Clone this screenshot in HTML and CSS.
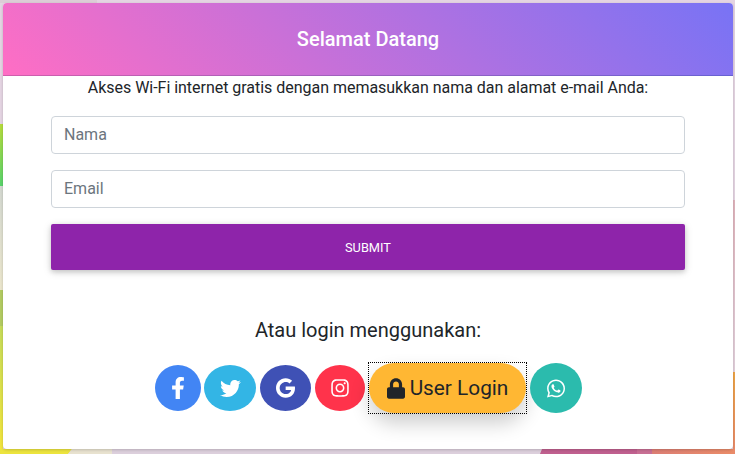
FILE: index.html
```html
<!DOCTYPE html>
<html lang="id">
<head>
<meta charset="utf-8">
<title>Selamat Datang</title>
<link rel="stylesheet" href="styles.css">
</head>
<body>
<svg class="backdrop" width="735" height="454" viewBox="0 0 735 454" aria-hidden="true">
  <defs>
    <linearGradient id="lime" x1="0" y1="0" x2="0" y2="1"><stop offset="0" stop-color="#b6dc3c"/><stop offset="1" stop-color="#58d36c"/></linearGradient>
    <linearGradient id="beige" x1="0" y1="0" x2="0" y2="1"><stop offset="0" stop-color="#d3d8d0"/><stop offset="1" stop-color="#ebe6cc"/></linearGradient>
    <linearGradient id="yellow" x1="0" y1="0" x2="0" y2="1"><stop offset="0" stop-color="#c6dc5a"/><stop offset="1" stop-color="#f4e53c"/></linearGradient>
    <linearGradient id="orange" x1="0" y1="0" x2="0" y2="1"><stop offset="0" stop-color="#eda445"/><stop offset="1" stop-color="#e98a6c"/></linearGradient>
    <linearGradient id="pink" x1="0" y1="0" x2="0" y2="1"><stop offset="0" stop-color="#e0b4bc"/><stop offset="1" stop-color="#e2d0dc"/></linearGradient>
    <linearGradient id="coral" x1="0" y1="0" x2="1" y2="0"><stop offset="0" stop-color="#dc7e74"/><stop offset="1" stop-color="#ea8c68"/></linearGradient>
  </defs>
  <rect width="735" height="454" fill="#e4d4e2"/>
  <rect x="0" y="0" width="97" height="3" fill="#dccdd6"/>
  <rect x="0" y="124" width="3" height="62" fill="url(#lime)"/>
  <rect x="0" y="186" width="3" height="104" fill="url(#beige)"/>
  <rect x="0" y="325" width="3" height="129" fill="url(#yellow)"/>
  <rect x="0" y="290" width="3" height="36" fill="#b3cb62"/>
  <polygon points="0,449 72,449 68,454 0,454" fill="#ece43e"/>
  <polygon points="72,449 116,449 112,454 68,454" fill="#e8e2cf"/>
  <rect x="112" y="449" width="430" height="5" fill="#dccfdc"/>
  <polygon points="542,449 637,449 637,454 540,454" fill="#c0608f"/>
  <rect x="637" y="449" width="15" height="5" fill="#c86f94"/>
  <rect x="652" y="449" width="83" height="5" fill="url(#coral)"/>
  <rect x="733" y="200" width="2" height="172" fill="url(#pink)"/>
  <rect x="733" y="372" width="2" height="82" fill="url(#orange)"/>
</svg>

<main class="card">
  <header class="card-head">Selamat Datang</header>
  <p class="intro">Akses Wi-Fi internet gratis dengan memasukkan nama dan alamat e-mail Anda:</p>
  <form class="form">
    <input class="field" type="text" placeholder="Nama">
    <input class="field" type="text" placeholder="Email">
    <button class="submit" type="button">SUBMIT</button>
  </form>
  <p class="alt">Atau login menggunakan:</p>
  <div class="socials">
    <a class="social fb"><svg class="ico-f" viewBox="0 0 320 512"><path d="M279.14 288l14.22-92.66h-88.91v-60.13c0-25.35 12.42-50.06 52.24-50.06h40.42V6.26S260.43 0 225.36 0c-73.22 0-121.08 44.38-121.08 124.72v70.62H22.89V288h81.39v224h100.17V288z"/></svg></a>
    <a class="social tw"><svg class="ico-t" viewBox="0 0 512 512"><path d="M459.37 151.716c.325 4.548.325 9.097.325 13.645 0 138.72-105.583 298.558-298.558 298.558-59.452 0-114.68-17.219-161.137-47.106 8.447.974 16.568 1.299 25.34 1.299 49.055 0 94.213-16.568 130.274-44.832-46.132-.975-84.792-31.188-98.112-72.772 6.498.974 12.995 1.624 19.818 1.624 9.421 0 18.843-1.3 27.614-3.573-48.081-9.747-84.143-51.98-84.143-102.985v-1.299c13.969 7.797 30.214 12.67 47.431 13.319-28.264-18.843-46.781-51.005-46.781-87.391 0-19.492 5.197-37.36 14.294-52.954 51.655 63.675 129.3 105.258 216.365 109.807-1.624-7.797-2.599-15.918-2.599-24.04 0-57.828 46.782-104.934 104.934-104.934 30.213 0 57.502 12.67 76.67 33.137 23.715-4.548 46.456-13.32 66.599-25.34-7.798 24.366-24.366 44.833-46.132 57.827 21.117-2.273 41.584-8.122 60.426-16.243-14.292 20.791-32.161 39.308-52.628 54.253z"/></svg></a>
    <a class="social gg"><svg class="ico-g" viewBox="0 0 488 512"><path d="M488 261.8C488 403.3 391.1 504 248 504 110.8 504 0 393.2 0 256S110.8 8 248 8c66.8 0 123 24.5 166.3 64.9l-67.5 64.9C258.5 52.6 94.3 116.6 94.3 256c0 86.5 69.1 156.6 153.7 156.6 98.2 0 135-70.4 140.8-106.9H248v-85.3h236.1c2.3 12.7 3.9 24.9 3.9 41.4z"/></svg></a>
    <a class="social ig"><svg class="ico-i" viewBox="0 0 448 512"><path d="M224.1 141c-63.6 0-114.9 51.3-114.9 114.9s51.3 114.9 114.9 114.9S339 319.5 339 255.9 287.7 141 224.1 141zm0 189.6c-41.1 0-74.7-33.5-74.7-74.7s33.5-74.7 74.7-74.7 74.7 33.5 74.7 74.7-33.6 74.7-74.7 74.7zm146.4-194.3c0 14.9-12 26.8-26.8 26.8-14.9 0-26.8-12-26.8-26.8s12-26.8 26.8-26.8 26.8 12 26.8 26.8zm76.1 27.2c-1.7-35.9-9.9-67.7-36.2-93.9-26.2-26.2-58-34.4-93.9-36.2-37-2.1-147.9-2.1-184.9 0-35.8 1.7-67.6 9.9-93.9 36.1s-34.4 58-36.2 93.9c-2.1 37-2.1 147.9 0 184.9 1.7 35.9 9.9 67.7 36.2 93.9s58 34.4 93.9 36.2c37 2.1 147.9 2.1 184.9 0 35.9-1.7 67.7-9.9 93.9-36.2 26.2-26.2 34.4-58 36.2-93.9 2.1-37 2.1-147.8 0-184.8zM398.8 388c-7.8 19.6-22.9 34.7-42.6 42.6-29.5 11.7-99.5 9-132.1 9s-102.7 2.6-132.1-9c-19.6-7.8-34.7-22.9-42.6-42.6-11.7-29.5-9-99.5-9-132.1s-2.6-102.7 9-132.1c7.8-19.6 22.9-34.7 42.6-42.6 29.5-11.7 99.5-9 132.1-9s102.7-2.6 132.1 9c19.6 7.8 34.7 22.9 42.6 42.6 11.7 29.5 9 99.5 9 132.1s2.7 102.7-9 132.1z"/></svg></a>
    <div class="focus-box"><a class="login"><svg class="ico-l" viewBox="0 0 448 512"><path d="M400 224h-24v-72C376 68.2 307.8 0 224 0S72 68.2 72 152v72H48c-26.5 0-48 21.5-48 48v192c0 26.5 21.5 48 48 48h352c26.5 0 48-21.5 48-48V272c0-26.5-21.5-48-48-48zm-104 0H152v-72c0-39.7 32.3-72 72-72s72 32.3 72 72v72z"/></svg>User Login</a></div>
    <a class="social wa"><svg class="ico-w" viewBox="0 0 448 512"><path d="M380.9 97.1C339 55.1 283.2 32 223.9 32c-122.4 0-222 99.6-222 222 0 39.1 10.2 77.3 29.6 111L0 480l117.7-30.9c32.4 17.7 68.9 27 106.1 27h.1c122.3 0 224.1-99.6 224.1-222 0-59.3-25.2-115-67.1-157zm-157 341.6c-33.2 0-65.7-8.9-94-25.7l-6.7-4-69.8 18.3L72 359.2l-4.4-7c-18.5-29.4-28.2-63.3-28.2-98.2 0-101.7 82.8-184.5 184.6-184.5 49.3 0 95.6 19.2 130.4 54.1 34.8 34.9 56.2 81.2 56.1 130.5 0 101.8-84.9 184.6-186.6 184.6zm101.2-138.2c-5.5-2.8-32.8-16.2-37.9-18-5.1-1.9-8.8-2.8-12.5 2.8-3.7 5.6-14.3 18-17.6 21.8-3.2 3.7-6.5 4.2-12 1.4-32.6-16.3-54-29.1-75.5-66-5.7-9.8 5.7-9.1 16.3-30.3 1.8-3.7.9-6.9-.5-9.7-1.4-2.8-12.5-30.1-17.1-41.2-4.5-10.8-9.1-9.3-12.5-9.5-3.2-.2-6.9-.2-10.6-.2-3.7 0-9.7 1.4-14.8 6.9-5.1 5.6-19.4 19-19.4 46.3 0 27.3 19.9 53.7 22.6 57.4 2.8 3.7 39.1 59.7 94.8 83.8 35.2 15.2 49 16.5 66.6 13.9 10.7-1.6 32.8-13.4 37.4-26.4 4.6-13 4.6-24.1 3.2-26.4-1.3-2.5-5-3.9-10.5-6.6z"/></svg></a>
  </div>
</main>
</body>
</html>
```
FILE: styles.css
```css
* { box-sizing: border-box; }
html, body { margin: 0; height: 100%; overflow: hidden; }
body {
  position: relative;
  padding: 3px 2px 0 3px;
  font-family: Roboto, "Liberation Sans", sans-serif;
  color: #212529;
  background: #e4d4e2;
}
.backdrop { position: absolute; left: 0; top: 0; display: block; }
.card {
  position: relative;
  width: 730px;
  height: 446px;
  background: #fff;
  border-radius: 4px;
  overflow: hidden;
  box-shadow: 0 1px 3px rgba(0,0,0,.18);
}
.card-head {
  height: 73px;
  border-bottom: 1px solid rgba(0,0,0,.14);
  background: linear-gradient(45deg, #ff6ec4, #7873f5);
  color: #fff;
  font-size: 20px;
  font-weight: 500;
  text-align: center;
  line-height: 72px;
}
.intro {
  margin: 0;
  font-size: 16px;
  line-height: 24px;
  letter-spacing: -.027px;
  text-align: center;
}
.form {
  display: flex;
  flex-direction: column;
  gap: 16px;
  margin: 16px 48px 0;
}
.field {
  height: 38px;
  padding: 5px 12px 7px;
  border: 1px solid #ced4da;
  border-radius: 4px;
  background: #fff;
  font: 400 16px Roboto, sans-serif;
  color: #495057;
}
.field::placeholder { color: #6c757d; opacity: 1; }
.submit {
  height: 46px;
  border: 0;
  border-radius: 2px;
  background: #8e24aa;
  color: #fff;
  font: 400 12.8px Roboto, sans-serif;
  box-shadow: 0 2px 5px rgba(0,0,0,.16), 0 2px 10px rgba(0,0,0,.12);
}
.alt {
  margin: 47px 0 0;
  font-size: 20px;
  line-height: 27px;
  text-align: center;
}
.socials {
  display: flex;
  align-items: center;
  justify-content: center;
  gap: 4px;
  margin-top: 19px;
  height: 50px;
  padding-left: 1px;
}
.social {
  display: flex;
  align-items: center;
  justify-content: center;
  height: 46px;
  border-radius: 50%;
  fill: #fff;
}
.fb { width: 46px; background: #4285f4; margin-right: -1px; }
.tw { width: 52px; background: #33b5e5; }
.gg { width: 51px; background: #3f51b5; }
.ig { width: 50px; background: #ff334b; }
.wa { width: 52px; height: 50px; background: #2bbbad; }
.focus-box {
  width: 157px;
  height: 50px;
  outline: 1px dotted #000;
}
.login {
  display: flex;
  align-items: center;
  justify-content: center;
  gap: 5px;
  height: 50px;
  border-radius: 25px;
  background: #ffb733;
  font-size: 20.8px;
  box-shadow: 0 10px 20px rgba(0,0,0,.2);
  fill: #212529;
}
.ico-f { width: 14px; height: 22px; }
.ico-t { width: 21px; height: 21px; }
.ico-g { width: 19px; height: 20px; }
.ico-i { width: 18px; height: 20px; }
.ico-l { width: 18px; height: 21px; }
.ico-w { width: 18px; height: 21px; }
```
